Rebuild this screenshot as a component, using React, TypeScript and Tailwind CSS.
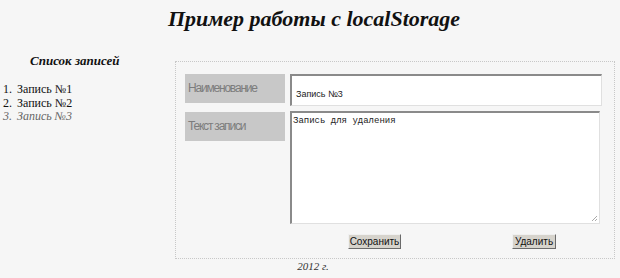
import React from "react";

export default function App() {
  const serif = { fontFamily: '"Liberation Serif", "Times New Roman", serif' };
  const sans = { fontFamily: '"Liberation Sans", Arial, sans-serif' };
  return (
    <div className="w-[620px] h-[278px] bg-[#f6f6f6] overflow-hidden" style={serif}>
      <h1 className="text-center text-[22px] leading-[26px] font-bold italic text-[#111] pt-[6px] pl-[8px]">
        Пример работы с localStorage
      </h1>
      <div className="flex items-start mt-[22px]">
        <div className="w-[175px] shrink-0">
          <div className="pl-[30px] text-[13px] leading-[15px] font-bold italic text-[#111] -mt-[1px]">
            Список записей
          </div>
          <ol className="mt-[15px] pl-[3px] text-[12px] leading-[13.5px] text-[#111]">
            <li className="flex"><span className="w-[14px]">1.</span>Запись №1</li>
            <li className="flex"><span className="w-[14px]">2.</span>Запись №2</li>
            <li className="flex italic text-[#666]"><span className="w-[14px]">3.</span>Запись №3</li>
          </ol>
        </div>
        <div className="mt-[7px] w-[440px] h-[198px] border border-dotted border-[#c8c8c8] pt-[12px] pl-[9px] pr-[11px] flex flex-col">
          <div className="flex">
            <div
              className="w-[100px] h-[29px] bg-[#c8c8c8] text-[#7c7c7c] text-[12px] leading-[29px] pl-[3px] tracking-[-1.2px]"
              style={sans}
            >
              Наименование
            </div>
            <div
              className="ml-[5px] w-[312px] h-[32px] bg-white border-t-2 border-l-2 border-t-[#8a8a8a] border-l-[#8a8a8a] border-r border-b border-r-[#e0e0e0] border-b-[#e0e0e0] text-[9px] text-[#222] pl-[4px] pt-[12px] leading-[12px]"
              style={sans}
            >
              Запись №3
            </div>
          </div>
          <div className="flex mt-[5px]">
            <div
              className="w-[100px] h-[29px] mt-[1px] bg-[#c8c8c8] text-[#7c7c7c] text-[12px] leading-[29px] pl-[3px] tracking-[-1.2px]"
              style={sans}
            >
              Текст записи
            </div>
            <div className="relative ml-[5px] w-[310px] h-[113px] bg-white border-t-2 border-l-2 border-t-[#8a8a8a] border-l-[#8a8a8a] border-r border-b border-r-[#e0e0e0] border-b-[#e0e0e0]">
              <div
                className="text-[9px] leading-[12px] text-[#222] pl-[1px] pt-[2px]"
                style={{ fontFamily: '"Liberation Mono", "Courier New", monospace' }}
              >
                Запись для удаления
              </div>
              <svg className="absolute right-[1px] bottom-[1px]" width="7" height="7" viewBox="0 0 7 7">
                <path d="M6 1 L1 6 M6 4 L4 6" stroke="#aaa" strokeWidth="1" />
              </svg>
            </div>
          </div>
          <div className="flex mt-[10px]" style={sans}>
            <button className="ml-[163px] w-[53px] h-[15px] bg-[#d6d3cc] border border-t-[#f0f0f0] border-l-[#f0f0f0] border-r-[#6a6a6a] border-b-[#6a6a6a] text-[10px] leading-[12px] text-[#111]">
              Сохранить
            </button>
            <button className="ml-[111px] w-[44px] h-[15px] bg-[#d6d3cc] border border-t-[#f0f0f0] border-l-[#f0f0f0] border-r-[#6a6a6a] border-b-[#6a6a6a] text-[10px] leading-[12px] text-[#111]">
              Удалить
            </button>
          </div>
        </div>
      </div>
      <div className="text-center pl-[6px] text-[11px] leading-[12px] italic text-[#333] mt-[1px]">2012 г.</div>
    </div>
  );
}
